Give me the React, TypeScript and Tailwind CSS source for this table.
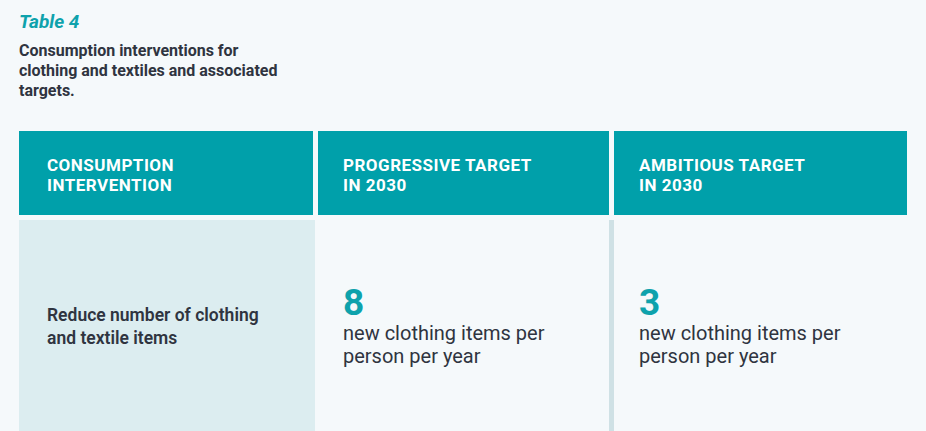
import React from "react";

const font = { fontFamily: "Roboto, 'Liberation Sans', sans-serif" };

export default function App() {
  return (
    <div className="w-[926px] h-[431px] overflow-hidden bg-[#f5f9fb] text-[#2f3440] flex flex-col" style={font}>
      <div className="pl-[19px] pt-[10px]">
        <div className="text-[19px] leading-[24px] font-bold italic text-[#0ea2ac]">Table 4</div>
        <div className="mt-[7px] text-[16px] leading-[20px] font-bold">
          Consumption interventions for<br />clothing and textiles and associated<br />targets.
        </div>
      </div>
      <div className="mt-[30px] ml-[19px] w-[888px] grid grid-cols-[294px_291px_293px] gap-x-[5px]">
        <div className="h-[84px] bg-[#00a0aa] flex items-center pl-[28px] pt-[4px] text-white font-bold text-[17px] leading-[20px] tracking-[0.5px]">
          CONSUMPTION<br />INTERVENTION
        </div>
        <div className="h-[84px] bg-[#00a0aa] flex items-center pl-[25px] pt-[4px] text-white font-bold text-[17px] leading-[20px] tracking-[0.5px]">
          PROGRESSIVE TARGET<br />IN 2030
        </div>
        <div className="h-[84px] bg-[#00a0aa] flex items-center pl-[25px] pt-[4px] text-white font-bold text-[17px] leading-[20px] tracking-[0.5px]">
          AMBITIOUS TARGET<br />IN 2030
        </div>
      </div>
      <div className="mt-[5px] ml-[19px] w-[888px] flex-1 flex">
        <div className="w-[296px] bg-[#dcedf0] flex items-center pl-[28px] pt-[2px]">
          <div className="text-[17.5px] leading-[23px] font-semibold">
            Reduce number of clothing<br />and textile items
          </div>
        </div>
        <div className="w-[294px] flex items-center pl-[28px]">
          <div>
            <div className="text-[37px] leading-[38px] font-bold text-[#0ea2ac]">8</div>
            <div className="text-[20px] leading-[23px]">new clothing items per<br />person per year</div>
          </div>
        </div>
        <div className="w-[5px] bg-[#cfe1e5]" />
        <div className="flex-1 flex items-center pl-[25px]">
          <div>
            <div className="text-[37px] leading-[38px] font-bold text-[#0ea2ac]">3</div>
            <div className="text-[20px] leading-[23px]">new clothing items per<br />person per year</div>
          </div>
        </div>
      </div>
    </div>
  );
}
